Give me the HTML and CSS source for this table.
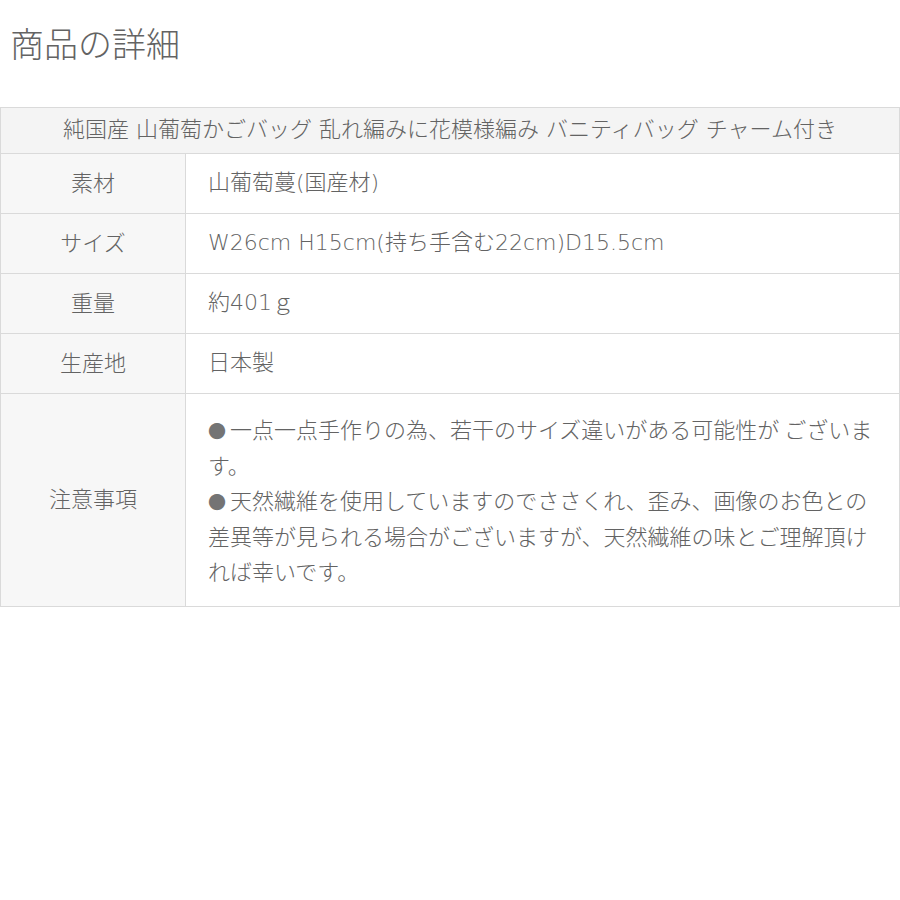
FILE: index.html
```html
<!DOCTYPE html>
<html lang="ja">
<head>
<meta charset="utf-8">
<title>商品の詳細</title>
<link rel="stylesheet" href="styles.css">
</head>
<body>
<h1 class="title">商品の詳細</h1>
<table class="spec">
  <colgroup>
    <col class="col-label">
    <col class="col-value">
  </colgroup>
  <tr>
    <th class="spec-head" colspan="2">純国産 山葡萄かごバッグ 乱れ編みに花模様編み バニティバッグ チャーム付き</th>
  </tr>
  <tr>
    <th class="label">素材</th>
    <td class="value">山葡萄蔓(国産材)</td>
  </tr>
  <tr>
    <th class="label">サイズ</th>
    <td class="value">W26cm H15cm(持ち手含む22cm)D15.5cm</td>
  </tr>
  <tr>
    <th class="label">重量</th>
    <td class="value">約401ｇ</td>
  </tr>
  <tr>
    <th class="label">生産地</th>
    <td class="value">日本製</td>
  </tr>
  <tr>
    <th class="label">注意事項</th>
    <td class="value notes"><span class="bullet">●</span>一点一点手作りの為、若干のサイズ違いがある可能性が ございます。<br><span class="bullet">●</span>天然繊維を使用していますのでささくれ、歪み、画像のお色との差異等が見られる場合がございますが、天然繊維の味とご理解頂ければ幸いです。</td>
  </tr>
</table>
</body>
</html>
```
FILE: styles.css
```css
html, body {
  margin: 0;
  padding: 0;
  background: #ffffff;
}

body {
  font-family: "DejaVu Sans", "Noto Sans CJK JP", sans-serif;
  color: #636363;
}

.title {
  margin: 21px 0 42px 10px;
  font-family: "Noto Sans CJK JP", sans-serif;
  font-size: 34px;
  line-height: 44px;
  font-weight: 300;
  color: #636363;
}

.spec {
  width: 900px;
  border-collapse: collapse;
  table-layout: fixed;
  font-size: 22px;
}

.col-label {
  width: 185px;
}

.spec th,
.spec td {
  border: 1px solid #dadada;
  font-weight: 300;
  vertical-align: middle;
  padding: 0;
}

.spec th.spec-head {
  height: 43px;
  background: #f4f4f4;
  text-align: center;
  line-height: 30px;
  padding-bottom: 2px;
}

.spec th.label {
  height: 53px;
  background: #f7f7f7;
  text-align: center;
  line-height: 30px;
  padding-bottom: 6px;
  font-family: "Noto Sans CJK JP", sans-serif;
}

.spec td.value {
  height: 57px;
  background: #ffffff;
  text-align: left;
  padding: 0 22px 2px;
  line-height: 30px;
}

.spec td.notes {
  height: auto;
  font-family: "Noto Sans CJK JP", sans-serif;
  line-height: 35.5px;
  padding: 17px 22px;
}

.bullet {
  font-size: 18px;
  line-height: 0;
  padding-right: 4px;
  color: #747474;
}
```
